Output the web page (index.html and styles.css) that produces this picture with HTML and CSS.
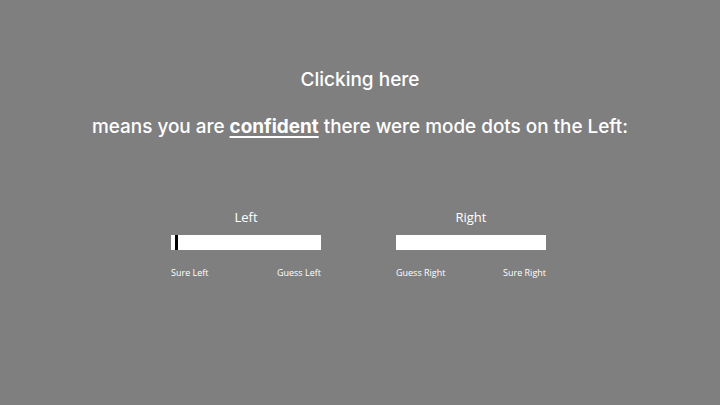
FILE: index.html
```html
<!DOCTYPE html>
<html>
<head>
<meta charset="utf-8">
<link rel="stylesheet" href="styles.css">
</head>
<body>
<div class="page">
  <h1 class="title">Clicking here</h1>
  <p class="subtitle">means you are <u class="strong">confident</u> there were mode dots on the Left:</p>
  <div class="scales">
    <div class="scale">
      <div class="scale-label">Left</div>
      <div class="bar"><span class="marker"></span></div>
      <div class="ends"><span>Sure Left</span><span>Guess Left</span></div>
    </div>
    <div class="scale">
      <div class="scale-label">Right</div>
      <div class="bar"></div>
      <div class="ends"><span>Guess Right</span><span>Sure Right</span></div>
    </div>
  </div>
</div>
</body>
</html>
```
FILE: styles.css
```css
html, body { margin: 0; padding: 0; }
body { background: #7f7f7f; width: 720px; height: 405px; overflow: hidden; }
.page {
  display: flex; flex-direction: column; align-items: center;
  color: #fff; font-family: Inter, "Noto Sans", sans-serif;
  padding-top: 68px;
}
.title { margin: 0; font-size: 19px; font-weight: 500; line-height: 24px; }
.subtitle { margin: 23px 0 0; font-size: 18.9px; font-weight: 500; line-height: 24px; }
.strong { font-weight: 700; text-decoration-thickness: 2px; text-underline-offset: 3px; }
.scales { display: flex; gap: 75px; margin-top: 69px; margin-right: 3px; }
.scale { width: 150px; display: flex; flex-direction: column; font-family: "Open Sans", sans-serif; }
.scale-label { text-align: center; font-size: 13px; line-height: 18px; }
.bar { height: 15px; background: #fff; margin-top: 9px; position: relative; }
.marker { position: absolute; left: 4px; top: 0; width: 3px; height: 15px; background: #000; }
.ends { display: flex; justify-content: space-between; font-size: 9px; margin-top: 17px; line-height: 12px; }
```
